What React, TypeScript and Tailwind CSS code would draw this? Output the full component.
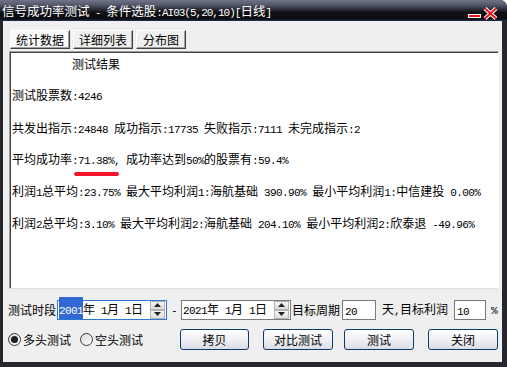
import React from "react";

const CJK = "font-['Noto_Sans_CJK_SC',sans-serif] text-[12px]";
const ASC = "font-['Liberation_Mono',monospace] text-[11px] tracking-[-0.6px]";
const TCJK = "font-['Noto_Sans_CJK_SC',sans-serif] text-[12.5px]";
const TASC = "font-['Liberation_Mono',monospace] text-[11px] tracking-[-1px]";

function Mixed({ text, cjk = CJK, asc = ASC }: { text: string; cjk?: string; asc?: string }) {
  const parts: { s: string; c: boolean }[] = [];
  for (const ch of text) {
    const c = ch.charCodeAt(0) > 0x2e7f;
    const last = parts[parts.length - 1];
    if (last && last.c === c) last.s += ch;
    else parts.push({ s: ch, c });
  }
  return (
    <>
      {parts.map((p, i) => (
        <span key={i} className={p.c ? cjk : asc}>
          {p.s}
        </span>
      ))}
    </>
  );
}

function Line({ children, className = "" }: { children: React.ReactNode; className?: string }) {
  return <div className={`h-[12px] leading-[12px] whitespace-pre text-black ${className}`}>{children}</div>;
}

function Tab({ label, w, active }: { label: string; w: string; active?: boolean }) {
  return (
    <div
      className={`${w} h-[19px] flex items-center justify-center border border-t-white border-l-white border-r-[#404040] border-b-[#404040] shadow-[inset_-1px_-1px_0_#a0a0a0] leading-[12px] ${
        active ? "bg-[#f9f9f9]" : "bg-[#efefef]"
      }`}
    >
      <Mixed text={label} />
    </div>
  );
}

function Arrow({ up }: { up?: boolean }) {
  return (
    <div className="flex-1 border border-[#b4b4b4] bg-[linear-gradient(to_bottom,#f6f6f6,#dcdcdc)] flex items-center justify-center">
      <svg width="7" height="4" viewBox="0 0 7 4">
        {up ? <path d="M0 4 L3.5 0 L7 4 Z" fill="#222" /> : <path d="M0 0 L3.5 4 L7 0 Z" fill="#222" />}
      </svg>
    </div>
  );
}

function DateBox({ focused }: { focused?: boolean }) {
  return (
    <div
      className={`w-[110px] h-[20px] bg-white border flex items-center ${
        focused ? "border-[#2a78d0]" : "border-[#7a7a7a]"
      }`}
    >
      <div className="pl-[1px] leading-[13px] whitespace-pre text-black">
        {focused ? (
          <span className="bg-[#3168d5] text-white">
            <Mixed text="2001" />
          </span>
        ) : (
          <Mixed text="2021" />
        )}
        <Mixed text="年 1月 1日" />
      </div>
      <div className="ml-auto mr-[1px] w-[15px] h-[18px] flex flex-col">
        <Arrow up />
        <Arrow />
      </div>
    </div>
  );
}

function NumBox({ value, w }: { value: string; w: string }) {
  return (
    <div className={`${w} h-[20px] bg-white border border-[#7a7a7a] pl-[2px] pt-[2px] leading-[12px]`}>
      <Mixed text={value} />
    </div>
  );
}

function Radio({ checked, label, cls }: { checked?: boolean; label: string; cls: string }) {
  return (
    <div className={`flex items-center ${cls}`}>
      <div className="w-[13px] h-[13px] rounded-full border border-[#3a3a3a] bg-[linear-gradient(135deg,#d8d8d8,#ffffff)] flex items-center justify-center">
        {checked && <div className="w-[7px] h-[7px] rounded-full bg-[#1e1e1e]" />}
      </div>
      <div className="ml-[2px] leading-[12px] whitespace-pre">
        <Mixed text={label} />
      </div>
    </div>
  );
}

function Btn({ label, cls }: { label: string; cls: string }) {
  return (
    <div
      className={`${cls} h-[21px] rounded-[3px] border border-[#0a3a6e] bg-[linear-gradient(to_bottom,#ffffff_0%,#f2f2f6_45%,#dcdce6_100%)] flex items-center justify-center leading-[12px]`}
    >
      <Mixed text={label} />
    </div>
  );
}

export default function App() {
  return (
    <div className="w-[507px] h-[367px] bg-[#26262e] flex flex-col rounded-tr-[7px] overflow-hidden select-none">
      <div className="h-[21px] shrink-0 flex items-start bg-[linear-gradient(to_bottom,#6f7387_0%,#565a6d_22%,#2a2b36_45%,#0f0f14_60%,#0b0b10_90%,#223058_100%)]">
        <div className="pl-[2px] h-[21px] leading-[21px] text-white whitespace-pre">
          <Mixed text="信号成功率测试 - 条件选股:AI03(5,20,10)[日线]" cjk={TCJK} asc={TASC} />
        </div>
        <svg className="ml-auto mr-[7px] mt-[7px]" width="34" height="13" viewBox="0 0 34 13">
          <rect x="2.5" y="7.5" width="12" height="3" fill="#e8101c" stroke="#ffffff" />
          <path d="M19 1.5 L30 11.5 M30 1.5 L19 11.5" stroke="#ffffff" strokeWidth="4" />
          <path d="M19 1.5 L30 11.5 M30 1.5 L19 11.5" stroke="#e8101c" strokeWidth="2" />
        </svg>
      </div>

      <div className="flex-1 ml-[3px] mr-[5px] mb-[5px] bg-[#efefef] flex flex-col text-black">
        <div className="mt-[9px] ml-[7px] flex gap-[3px]">
          <Tab label="统计数据" w="w-[60px]" active />
          <Tab label="详细列表" w="w-[60px]" />
          <Tab label="分布图" w="w-[50px]" />
        </div>

        <div className="mt-[2px] ml-[6px] w-[490px] h-[238px] bg-white border border-t-[#a0a0a0] border-l-[#a0a0a0] border-r-white border-b-[#e0e0e0] shadow-[inset_1px_1px_0_#404040] pl-[1px] pt-[5px] flex flex-col">
          <Line className="pl-[61px]">
            <Mixed text="测试结果" />
          </Line>
          <Line className="mt-[19px] pl-[1px]">
            <Mixed text="测试股票数:4246" />
          </Line>
          <Line className="mt-[21px] pl-[1px]">
            <Mixed text="共发出指示:24848 成功指示:17735 失败指示:7111 未完成指示:2" />
          </Line>
          <Line className="mt-[19px] pl-[1px]">
            <Mixed text="平均成功率:" />
            <span className="relative">
              <Mixed text="71.38%" />
              <span className="absolute left-[-4px] right-[-5px] top-[25px] h-[4px] rounded-full bg-[#f3142c]" />
            </span>
            <Mixed text=", 成功率达到50%的股票有:59.4%" />
          </Line>
          <Line className="mt-[20px] pl-[1px]">
            <Mixed text="利润1总平均:23.75% 最大平均利润1:海航基础 390.90% 最小平均利润1:中信建投 0.00%" />
          </Line>
          <Line className="mt-[20px] pl-[1px]">
            <Mixed text="利润2总平均:3.10% 最大平均利润2:海航基础 204.10% 最小平均利润2:欣泰退 -49.96%" />
          </Line>
        </div>

        <div className="mt-[10px] h-[21px] flex items-center">
          <div className="ml-[5px] w-[49px] leading-[12px] whitespace-pre">
            <Mixed text="测试时段" />
          </div>
          <DateBox focused />
          <div className="w-[14px] text-center leading-[12px]">
            <Mixed text="-" />
          </div>
          <DateBox />
          <div className="ml-[1px] leading-[12px] whitespace-pre">
            <Mixed text="目标周期" />
          </div>
          <div className="ml-[2px]">
            <NumBox value="20" w="w-[34px]" />
          </div>
          <div className="ml-[6px] leading-[12px] whitespace-pre">
            <Mixed text="天,目标利润" />
          </div>
          <div className="ml-[6px]">
            <NumBox value="10" w="w-[32px]" />
          </div>
          <div className="ml-[5px] leading-[12px]">
            <Mixed text="%" />
          </div>
        </div>

        <div className="mt-[9px] h-[21px] flex items-center">
          <Radio checked label="多头测试" cls="ml-[5px]" />
          <Radio label="空头测试" cls="ml-[9px]" />
          <Btn label="拷贝" cls="ml-[37px] w-[69px]" />
          <Btn label="对比测试" cls="ml-[14px] w-[70px]" />
          <Btn label="测试" cls="ml-[11px] w-[70px]" />
          <Btn label="关闭" cls="ml-[14px] w-[70px]" />
        </div>
      </div>
    </div>
  );
}
